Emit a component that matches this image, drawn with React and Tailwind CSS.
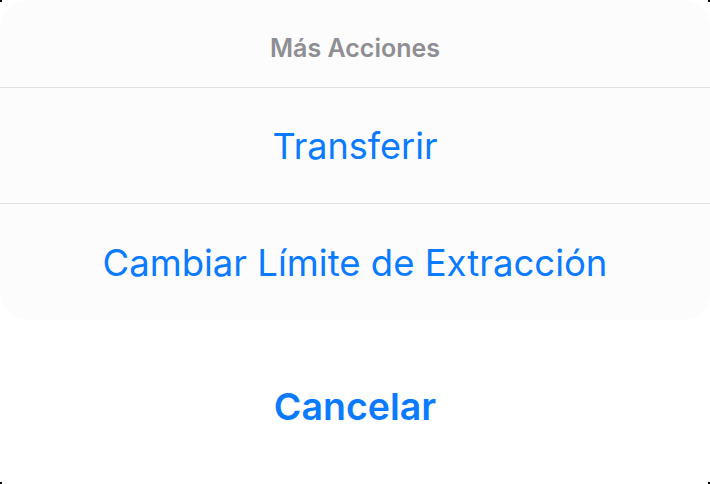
export default function App() {
  return (
    <div
      className="relative w-[710px] h-[484px] bg-white overflow-hidden flex flex-col"
      style={{ fontFamily: 'Inter, "Noto Sans", sans-serif' }}
    >
      <div className="h-[320px] rounded-[28px] bg-[#fcfcfc] flex flex-col">
        <div className="h-[88px] border-b border-[#e0e0e2] flex items-center justify-center pt-[10px]">
          <span className="text-[25px] font-semibold text-[#8e8e93]">Más Acciones</span>
        </div>
        <div className="h-[116px] border-b border-[#e0e0e2] flex items-center justify-center">
          <span className="text-[36px] text-[#0a7aff]">Transferir</span>
        </div>
        <div className="flex-1 flex items-center justify-center pt-[2px]">
          <span className="text-[36.5px] text-[#0a7aff]">Cambiar Límite de Extracción</span>
        </div>
      </div>
      <div className="flex-1 flex items-center justify-center pt-[10px]">
        <span className="text-[37.5px] font-semibold text-[#0a7aff]">Cancelar</span>
      </div>
      <div className="absolute top-0 left-0 w-[2px] h-[2px] bg-black" />
      <div className="absolute top-0 right-0 w-[2px] h-[2px] bg-black" />
      <div className="absolute bottom-0 left-0 w-[2px] h-[2px] bg-black" />
      <div className="absolute bottom-0 right-0 w-[2px] h-[2px] bg-black" />
    </div>
  );
}
